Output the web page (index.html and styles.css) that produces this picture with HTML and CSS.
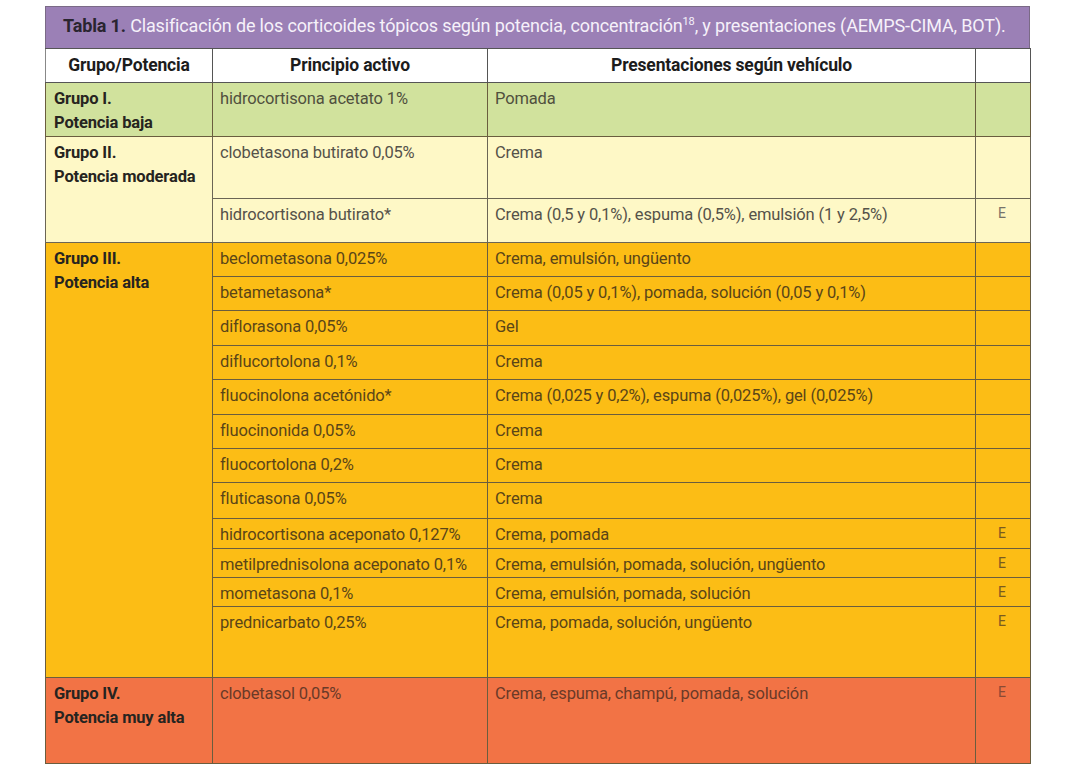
FILE: index.html
```html
<!DOCTYPE html>
<html lang="es">
<head>
<meta charset="utf-8">
<title>Tabla 1</title>
<link rel="stylesheet" href="styles.css">
</head>
<body>
<div class="wrap">
  <div class="title"><b>Tabla 1.</b> Clasificación de los corticoides tópicos según potencia, concentración<sup>18</sup>, y presentaciones (AEMPS-CIMA, BOT).</div>
  <table class="tbl">
    <colgroup>
      <col class="c1"><col class="c2"><col class="c3"><col class="c4">
    </colgroup>
    <thead>
      <tr class="head">
        <th>Grupo/Potencia</th><th>Principio activo</th><th>Presentaciones según vehículo</th><th></th>
      </tr>
    </thead>
    <tbody>
      <tr class="g1 h54">
        <td class="grp">Grupo I.<br>Potencia baja</td><td>hidrocortisona acetato 1%</td><td>Pomada</td><td class="e"></td>
      </tr>
      <tr class="g2 h62">
        <td class="grp" rowspan="2">Grupo II.<br>Potencia moderada</td><td>clobetasona butirato 0,05%</td><td>Crema</td><td class="e"></td>
      </tr>
      <tr class="g2 h44">
        <td>hidrocortisona butirato*</td><td>Crema (0,5 y 0,1%), espuma (0,5%), emulsión (1 y 2,5%)</td><td class="e">E</td>
      </tr>
      <tr class="g3 h34">
        <td class="grp" rowspan="12">Grupo III.<br>Potencia alta</td><td>beclometasona 0,025%</td><td>Crema, emulsión, ungüento</td><td class="e"></td>
      </tr>
      <tr class="g3 h34"><td>betametasona*</td><td>Crema (0,05 y 0,1%), pomada, solución (0,05 y 0,1%)</td><td class="e"></td></tr>
      <tr class="g3 h35"><td>diflorasona 0,05%</td><td>Gel</td><td class="e"></td></tr>
      <tr class="g3 h34"><td>diflucortolona 0,1%</td><td>Crema</td><td class="e"></td></tr>
      <tr class="g3 h35"><td>fluocinolona acetónido*</td><td>Crema (0,025 y 0,2%), espuma (0,025%), gel (0,025%)</td><td class="e"></td></tr>
      <tr class="g3 h34"><td>fluocinonida 0,05%</td><td>Crema</td><td class="e"></td></tr>
      <tr class="g3 h34"><td>fluocortolona 0,2%</td><td>Crema</td><td class="e"></td></tr>
      <tr class="g3 h36"><td>fluticasona 0,05%</td><td>Crema</td><td class="e"></td></tr>
      <tr class="g3 h30"><td>hidrocortisona aceponato 0,127%</td><td>Crema, pomada</td><td class="e">E</td></tr>
      <tr class="g3 h29"><td>metilprednisolona aceponato 0,1%</td><td>Crema, emulsión, pomada, solución, ungüento</td><td class="e">E</td></tr>
      <tr class="g3 h29"><td>mometasona 0,1%</td><td>Crema, emulsión, pomada, solución</td><td class="e">E</td></tr>
      <tr class="g3 h71"><td>prednicarbato 0,25%</td><td>Crema, pomada, solución, ungüento</td><td class="e">E</td></tr>
      <tr class="g4 h86">
        <td class="grp">Grupo IV.<br>Potencia muy alta</td><td>clobetasol 0,05%</td><td>Crema, espuma, champú, pomada, solución</td><td class="e">E</td>
      </tr>
    </tbody>
  </table>
</div>
</body>
</html>
```

FILE: styles.css
```css
html, body {
  margin: 0;
  padding: 0;
  background: #ffffff;
}
body {
  padding: 6px 0 0 45px;
  font-family: Roboto, "Liberation Sans", sans-serif;
  color: #4a4536;
}
.wrap {
  width: 985px;
}
.title {
  box-sizing: border-box;
  height: 42px;
  background: #9b80b6;
  border: 1px solid #7a6a86;
  border-bottom: none;
  padding: 0 0 0 17px;
  font-size: 18px;
  line-height: 38px;
  color: #f6f1fa;
  white-space: nowrap;
  letter-spacing: -0.15px;
}
.title b {
  color: #2a2530;
  font-weight: bold;
}
.title sup {
  font-size: 11px;
  line-height: 0;
  vertical-align: 0;
  position: relative;
  top: -7px;
}
.tbl {
  width: 985px;
  border-collapse: collapse;
  table-layout: fixed;
  font-size: 16.5px;
  letter-spacing: -0.15px;
}
.c1 { width: 167px; }
.c2 { width: 275px; }
.c3 { width: 488px; }
.c4 { width: 55px; }
.tbl th, .tbl td {
  border: 1px solid #6a5d3e;
  padding: 4px 7px 0 7px;
  line-height: 24px;
  vertical-align: top;
  text-align: left;
  white-space: nowrap;
}
.tbl th {
  background: #ffffff;
  color: #1c1c1c;
  font-weight: bold;
  font-size: 17.5px;
  text-align: center;
  height: 29px;
  padding: 1px 4px 3px;
  vertical-align: middle;
  border-color: #555;
}
.head th:first-child { border-left-color: #888; }
.tbl td.grp {
  font-weight: bold;
  color: #2b2a24;
  padding-left: 8px;
}
.tbl td.e {
  text-align: center;
  font-size: 14px;
  color: #7a7468;
  padding: 2px 2px 0 0;
}
.g1 td { background: #d1e29d; color: #50503e; }
.g2 td { background: #fef8c6; color: #55524a; border-color: #6b6555; }
.g3 td { background: #fcbd15; color: #5a4518; }
.g4 td { background: #f27345; color: #6a3a28; }
.g3 td.e { color: #7a5a20; }
.g4 td.e { color: #8a4a35; }
.g2 td.e { color: #76736a; }
.g1 td.grp, .g2 td.grp, .g3 td.grp, .g4 td.grp { color: #262420; }
.h29 { height: 29px; }
.h30 { height: 30px; }
.h34 { height: 34px; }
.h35 { height: 35px; }
.h36 { height: 36px; }
.h44 { height: 44px; }
.h54 { height: 54px; }
.h62 { height: 62px; }
.h71 { height: 71px; }
.h86 { height: 86px; }
```
